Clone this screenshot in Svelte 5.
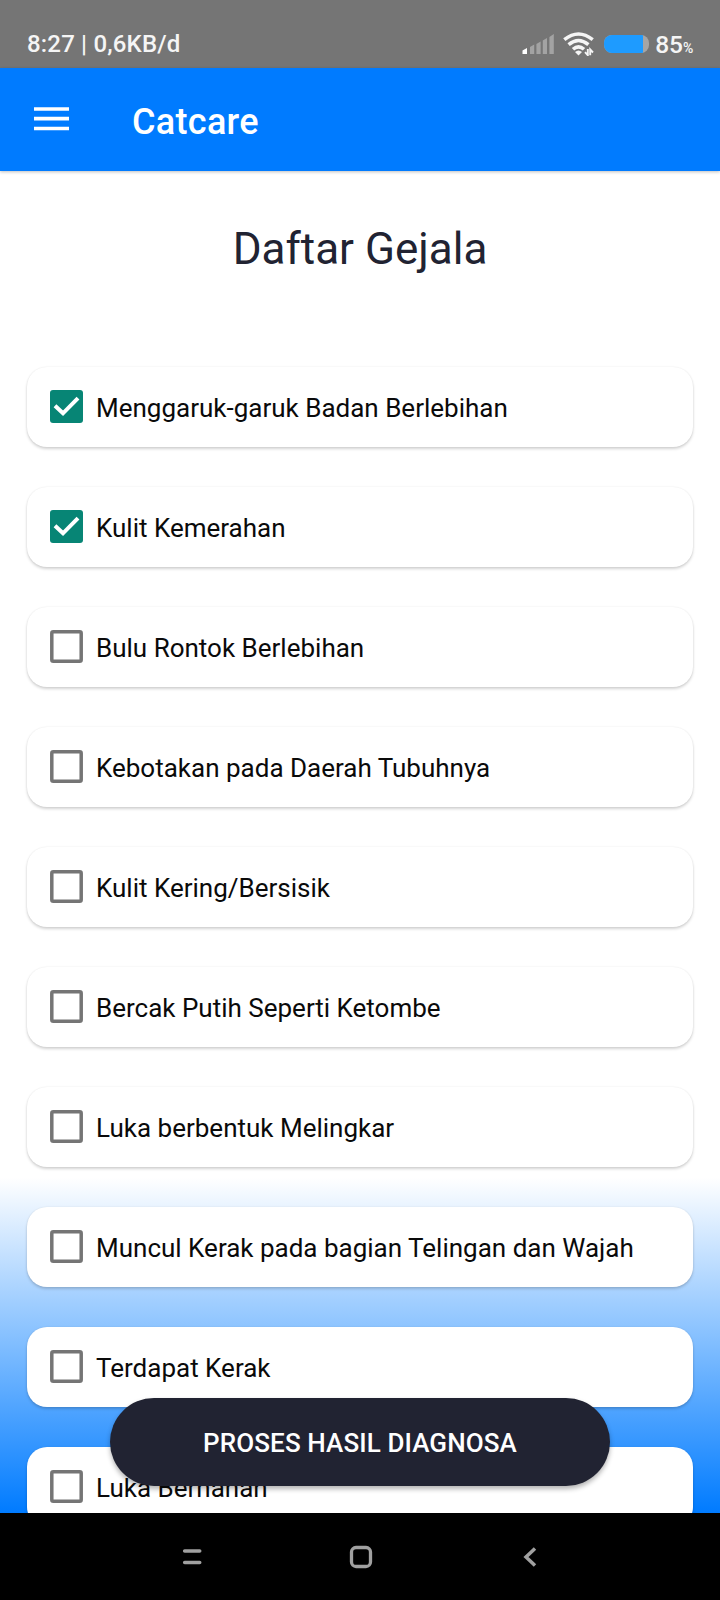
<script>
  const symptoms = [
    { name: 'Menggaruk-garuk Badan Berlebihan', checked: true },
    { name: 'Kulit Kemerahan', checked: true },
    { name: 'Bulu Rontok Berlebihan', checked: false },
    { name: 'Kebotakan pada Daerah Tubuhnya', checked: false },
    { name: 'Kulit Kering/Bersisik', checked: false },
    { name: 'Bercak Putih Seperti Ketombe', checked: false },
    { name: 'Luka berbentuk Melingkar', checked: false },
    { name: 'Muncul Kerak pada bagian Telingan dan Wajah', checked: false },
    { name: 'Terdapat Kerak', checked: false },
    { name: 'Luka Bernanah', checked: false }
  ];
  let items = $state(symptoms);
</script>

<div class="phone">
  <div class="status">
    <span class="clock">8:27 | 0,6KB/d</span>
    <div class="indicators">
      <svg class="signal" width="33" height="22" viewBox="0 0 33 22">
        <path d="M0.500 17.500 L5 15 V21 H0.500z" fill="#fff" />
        <path d="M8 14l4.200-2.500V21H8zM14.400 11l4.200-2.500V21h-4.200zM20.800 7.500l4.200-2.500V21h-4.200zM27.400 4l4.400-3v20h-4.400z" fill="#a3a3a3" />
      </svg>
      <svg class="wifi" width="32" height="24" viewBox="0 0 32 24">
        <g fill="none" stroke="#f5f5f5" stroke-width="3.500">
          <path d="M1.300 7.700Q15.500 -3.800 29.700 7.700" />
          <path d="M5.600 12.600Q15.500 4.300 25.400 12.600" />
          <path d="M10 17.300Q15.500 12.300 21 17.300" />
        </g>
        <path d="M12 20q3.500-3 7 0L15.500 23.500z" fill="#f5f5f5" />
        <path d="M24.800 17v6.200l-2.800-3M27.200 23.200V17.500l2.800 3" fill="none" stroke="#f5f5f5" stroke-width="1.900" />
      </svg>
      <div class="battery"><div class="level" style="width:87%"></div></div>
      <span class="percent">85<small>%</small></span>
    </div>
  </div>

  <header>
    <svg width="35" height="24" viewBox="0 0 35 24" aria-hidden="true">
      <path d="M0 2h35M0 11.700h35M0 21.500h35" stroke="#fff" stroke-width="3.700" />
    </svg>
    <span class="brand">Catcare</span>
  </header>

  <main>
    <h1>Daftar Gejala</h1>
    <div class="list">
      {#each items as item}
        <button class="card" onclick={() => (item.checked = !item.checked)}>
          <span class="box" class:on={item.checked}>
            <svg width="33" height="33" viewBox="0 0 33 33">
              {#if item.checked}
                <path d="M5 15.800L13 23.300L28 8.200" fill="none" stroke="#fff" stroke-width="4" />
              {:else}
                <rect x="1.800" y="1.800" width="29.400" height="29.400" rx="1.500" fill="none" stroke="#757575" stroke-width="3.500" />
              {/if}
            </svg>
          </span>
          <span class="label">{item.name}</span>
        </button>
      {/each}
    </div>
    <button class="process"><span>PROSES HASIL DIAGNOSA</span></button>
  </main>

  <nav>
    <svg width="20" height="18" viewBox="0 0 20 18">
      <path d="M2.700 3h15M2.700 14.500h15" stroke="#a0a0a0" stroke-width="3.600" stroke-linecap="round" />
    </svg>
    <svg class="home" width="24" height="24" viewBox="0 0 24 24">
      <rect x="2.500" y="2.500" width="19" height="19" rx="4.500" fill="none" stroke="#a0a0a0" stroke-width="3.300" />
    </svg>
    <svg width="14" height="22" viewBox="0 0 14 22">
      <path d="M12 2.500L3 11l9 8.500" fill="none" stroke="#a0a0a0" stroke-width="3.500" />
    </svg>
  </nav>
</div>

<style>
  :global(body) {
    margin: 0;
  }
  .phone {
    width: 720px;
    height: 1600px;
    display: flex;
    flex-direction: column;
    overflow: hidden;
    font-family: Roboto, sans-serif;
  }
  button {
    border: 0;
    margin: 0;
    font-family: inherit;
    cursor: pointer;
  }
  svg {
    display: block;
  }
  .status {
    box-sizing: border-box;
    flex: 0 0 68px;
    padding: 20px 26px 0 27px;
    display: flex;
    justify-content: space-between;
    align-items: center;
    background: #757575;
    color: #f5f5f5;
  }
  .clock {
    font-size: 24px;
    font-weight: 500;
    letter-spacing: 0.180px;
    line-height: 28px;
    white-space: nowrap;
  }
  .indicators {
    display: flex;
    align-items: center;
  }
  .wifi {
    margin-left: 8px;
  }
  .battery {
    width: 45px;
    height: 18px;
    margin-left: 9px;
    border-radius: 8px;
    background: #a5a5a5;
    overflow: hidden;
  }
  .level {
    height: 100%;
    background: #1e9bff;
  }
  .percent {
    margin: 1px 0 0 6px;
    display: flex;
    align-items: baseline;
    font-size: 24.500px;
    font-weight: 500;
    line-height: 28px;
  }
  .percent small {
    width: 11px;
    font-size: 14px;
    line-height: 14px;
    letter-spacing: -1px;
  }
  header {
    position: relative;
    z-index: 1;
    box-sizing: border-box;
    flex: 0 0 103px;
    display: flex;
    align-items: center;
    padding: 0 34px;
    background: #007bff;
    box-shadow: 0 1px 3px rgba(0, 0, 0, 0.25);
  }
  header svg {
    margin-bottom: 2px;
  }
  .brand {
    margin: 4px 0 0 63px;
    color: #fff;
    font-size: 36px;
    font-weight: 500;
    letter-spacing: 0.300px;
    line-height: 44px;
  }
  main {
    position: relative;
    flex: 0 0 1342px;
    overflow: hidden;
    background: linear-gradient(#fff 75%, #007bff 100%);
  }
  h1 {
    margin: 52px 0 0;
    height: 144px;
    text-align: center;
    color: #212332;
    font-size: 44px;
    font-weight: 400;
    line-height: 52px;
  }
  .list {
    display: flex;
    flex-direction: column;
    gap: 40px;
    padding: 0 27px;
  }
  .card {
    flex: 0 0 80px;
    display: flex;
    align-items: center;
    gap: 13px;
    padding: 0 23px;
    border-radius: 20px;
    background: #fff;
    box-shadow: 0 2px 3px rgba(0, 0, 0, 0.17), 0 0 2px rgba(0, 0, 0, 0.08);
  }
  .box {
    flex: 0 0 33px;
    height: 33px;
    margin-bottom: 2px;
    border-radius: 3px;
  }
  .box.on {
    background: #078575;
  }
  .label {
    margin-top: 1px;
    color: #0a0a0a;
    font-size: 26px;
    line-height: 32px;
    white-space: nowrap;
  }
  .process {
    position: absolute;
    left: 110px;
    top: 1227px;
    width: 500px;
    height: 88px;
    padding-top: 3px;
    border-radius: 44px;
    background: #212332;
    color: #fff;
    font-size: 26px;
    font-weight: 500;
    letter-spacing: 0.100px;
    line-height: 32px;
    box-shadow: 0 3px 5px rgba(0, 0, 0, 0.3);
  }
  nav {
    box-sizing: border-box;
    flex: 0 0 87px;
    display: flex;
    align-items: center;
    justify-content: space-between;
    padding: 0 183px 0 182px;
    background: #000;
  }
  .home {
    margin-right: 4px;
  }
</style>
